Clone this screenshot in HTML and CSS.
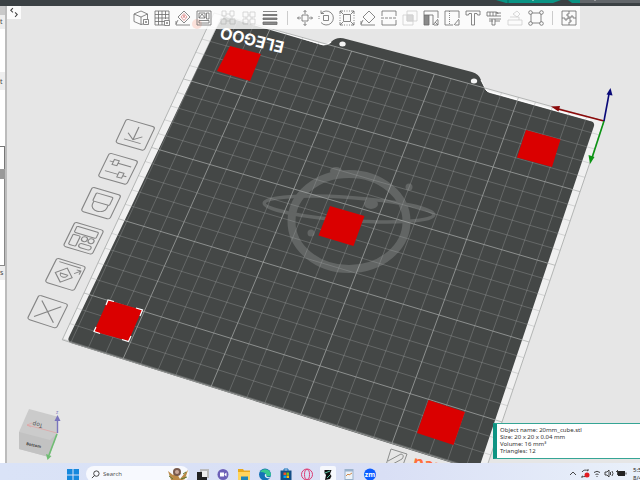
FILE: index.html
```
<!DOCTYPE html>
<html lang="en">
<head>
<meta charset="utf-8">
<title>20mm_cube</title>
<link rel="stylesheet" href="styles.css">
</head>
<body>
<header class="titlebar">
  <svg class="tabs" viewBox="0 0 152 6" aria-hidden="true">
    <path d="M8 0h65l-8 3H18z" fill="#0a9384"/><path d="M20 0v3M45 0v1" stroke="#04695f"/><path d="M45 0v1" stroke="#cfe"/>
    <path d="M80 0h12v3h-8z" fill="#0a9384"/><path d="M92 0h60v3H92z" fill="#62666a"/><path d="M107 0v1" stroke="#ccc"/>
  </svg>
</header>
<main class="work">
  <aside class="panel">
    <div class="block block-head"></div>
    <div class="block block-a">t</div>
    <div class="block block-b">t</div>
    <div class="block block-c"></div>
    <div class="block block-sel"></div>
    <div class="block block-d"></div>
    <div class="block block-e">s</div>
  </aside>
  <section class="viewport">
    <svg class="scene" viewBox="7 6 633 457" preserveAspectRatio="xMinYMin slice" role="img" aria-label="Build plate">
      <path id="margin" fill="#f0f0f0"/>
      <path fill="#444746" d="M217 27Q221 18 226 17L322 45Q327 46 331 42Q337 36 346 39L472 72Q479 74 481 80L486 90Q487 92 490 93L590 121Q595 122 594 126L478 471L417 452L71 343Q67 341 69 337Z"/>
      <path fill="none" stroke="#fff" stroke-width="1.2" d="M272 29L322 44.500Q327 45.500 331 42"/>
      <path fill="none" stroke="#fff" stroke-width="1" d="M481 80L486 90Q487 92 490 92L590 120"/>
      <ellipse cx="342.500" cy="44" rx="3.200" ry="2.500" fill="#f4f4f4"/><ellipse cx="474" cy="81" rx="3.200" ry="2.500" fill="#f4f4f4"/>
      <g fill="none" stroke="#626564">
        <ellipse cx="349" cy="221.500" rx="57.500" ry="47.500" stroke-width="8"/>
        <ellipse cx="349" cy="209" rx="85" ry="11.500" stroke-width="3.500" transform="rotate(4 349 209)"/>
      </g>
      <g fill="#626564"><ellipse cx="336" cy="171" rx="6" ry="4"/><circle cx="409" cy="187" r="3.500"/><circle cx="311" cy="233" r="3.500"/><ellipse cx="371" cy="204" rx="7" ry="5"/></g>
      <path id="thin" fill="none" stroke="#9da09f" stroke-width=".6" stroke-opacity=".62"/>
      <path id="bold" fill="none" stroke="#a8abaa" stroke-width=".9" stroke-opacity=".8"/>
      <path id="edge" fill="none" stroke="#a5a7a6" stroke-width=".8"/>
      <text class="brand" transform="translate(285 42) rotate(193.500)">ELEGOO</text>
      <g fill="#da0000">
        <path d="M230 46L261 54L250 81L217 71Z"/><path d="M526 130L560.500 139.500L552 167L517 157.500Z"/>
        <path d="M330 206L364.500 216L353.500 246L318.500 235.500Z"/><path d="M108 300L142 310L128.500 341L94 331.500Z"/><path d="M428.500 400L465 412L453.500 445L417 433Z"/>
      </g>
      <path fill="none" stroke="#fff" stroke-width="1.200" d="M106 305L108 300L114 301.500M136 308L142.500 310L140 316M96 327L94 331.500L100 333.500M122 339.500L128.500 341.500L131 336"/>
      <path stroke="#8c0a0a" stroke-width="1.600" d="M604 121L558 109"/><path fill="#8c0a0a" d="M551 106.500L560 106L558.500 111.500Z"/>
      <path stroke="#0c9414" stroke-width="1.600" d="M604 121L592 158"/><path fill="#0c9414" d="M590 164L588.500 155L594.500 157Z"/>
      <path stroke="#0a0a78" stroke-width="1.600" d="M604 121L609 94"/><path fill="#0a0a78" d="M610.500 88L606.500 94.500L612.500 95.500Z"/>
      <g fill="none" stroke="#8b8d8c" stroke-width="1"><path d="M391 449L407 454L403 465H386Z"/><path d="M388 461L401 454Q405 455 402 459L391 465"/></g>
      <text class="plate-name" transform="translate(412 467) rotate(12)">pau</text>
      <path fill="#cbcbcb" d="M29 409L57 416.500L57.500 433L49 457L19 449L19 432Z"/><path fill="#c2c2c2" d="M19 432L50 440L57.500 433L49 457L19 449Z"/>
      <path d="M57 433L27 425M32 423L27 425L31 427" fill="none" stroke="#dfa5a5" stroke-width=".8"/>
      <path stroke="#7974bd" stroke-width="1.400" d="M57.500 433V421"/><path fill="#7974bd" d="M54.500 421L57.500 415L60.500 421Z"/>
      <path stroke="#6fbd73" stroke-width="1.600" d="M57 434L49 455"/><path fill="#6fbd73" d="M47.500 460L46 454L51.500 456Z"/>
      <text class="cube-top" transform="translate(43 424) rotate(193)">Top</text><text class="cube-front" transform="translate(26 445) rotate(12)">Bottom</text>
      <text class="cube-z" x="56" y="414">z</text>
    </svg>

    <button class="expand" aria-label="Toggle panel"><svg viewBox="0 0 13 12"><path d="M5.500 2L3.500 4L5.500 6M7.500 6L9.500 8L7.500 10" class="ln"/></svg></button>

    <nav class="toolbar" aria-label="Tools">
      <button aria-label="Add object"><svg viewBox="0 0 16 16"><path d="M1 4L8 1L14.500 4V9M1 4V11.500L8 14.500V7M1 4L8 7L14.500 4M8 14.500L10 14M10.500 9.500h5v5h-5zM13 11v2M12 12h2"/></svg></button>
      <button aria-label="Add plate"><svg viewBox="0 0 16 16"><path d="M10 15H1V1h14v9M4.500 1v14M8 1v14M11.500 1v8M1 4.500h14M1 8h14M1 11.500h9M10.500 10.500h5v5h-5zM13 12v2M12 13h2"/></svg></button>
      <button aria-label="Auto orient"><svg viewBox="0 0 16 16"><path d="M9 1L15 7L9 13L3 7ZM3 10L1 14M1 11v4h14"/><path class="hot" d="M9 3.500L12 7L9 10.500L6 7ZM8 8l1-3l1 3"/></svg></button>
      <button aria-label="Arrange"><svg viewBox="0 0 16 16"><circle class="glow" cx="1" cy="14" r="5"/><path d="M1 1h14v14H1zM3 3h6v5H3zM10.500 3h2.500v6h-2.500zM3 10.500h10v2.500H3zM3 8l3-4l3 4"/></svg></button>
      <button class="faint gap" aria-label="Split to objects"><svg viewBox="0 0 16 16"><path d="M2 1h4v5H2zM10 1h4v5h-4zM6 4h4M1 9h5v5H1zM10 9h5v5h-5zM6 11h4M4 6v3M12 6v3"/></svg></button>
      <button class="faint" aria-label="Split to parts"><svg viewBox="0 0 16 16"><path d="M2 2h5v5H2zM9 2h5v5H9zM2 9h5v5H2zM9 9h5v5H9zM7 5h2M7 11h2M5 7v2M11 7v2"/></svg></button>
      <button aria-label="Layer height"><svg viewBox="0 0 16 16"><path d="M1 1.500h14M1 4.500h14v1H1zM1 8h14v1.500H1zM1 12h14v2.500H1z" class="solid"/></svg></button>
      <span class="sep"></span>
      <button aria-label="Move"><svg viewBox="0 0 16 16"><path d="M5 5h6v6H5zM8 4V.500M6.500 2L8 .500L9.500 2M8 12v3.500M6.500 14L8 15.500L9.500 14M4 8H.500M2 6.500L.500 8L2 9.500M12 8h3.500M14 6.500L15.500 8L14 9.500"/></svg></button>
      <button aria-label="Rotate"><svg viewBox="0 0 16 16"><path d="M5.500 5.500h5v5h-5zM3 3.500A7 7 0 1 1 3 12.500M3 .500v3h3"/><path d="M1 6v4" stroke-dasharray="1 1"/></svg></button>
      <button aria-label="Scale"><svg viewBox="0 0 16 16"><path d="M4.500 4.500h7v7h-7zM1 4V1h3M12 1h3v3M15 12v3h-3M4 15H1v-3M1 1l3 3M15 1l-3 3M1 15l3-3M15 15l-3-3"/><path d="M5 1h6M5 15h6M1 5v6M15 5v6" stroke-dasharray="1 1.500"/></svg></button>
      <button aria-label="Place on face"><svg viewBox="0 0 16 16"><path d="M9 1L15 7L9 13L3 7ZM3 10L1 14M1 11v4h14"/></svg></button>
      <button aria-label="Cut"><svg viewBox="0 0 16 16"><path d="M1 6V1h14v5M1 10v5h14v-5"/><path d="M0 8h16" stroke-dasharray="3 1"/></svg></button>
      <button class="faint" aria-label="Mesh boolean"><svg viewBox="0 0 16 16"><path d="M1 5h10v10H1zM5 1h10v10H5z"/><path class="solid" d="M5 5h6v6H5z"/></svg></button>
      <button aria-label="Support painting"><svg viewBox="0 0 16 16"><path d="M1 5V1h14v7M6 5h4v10M10 15l5-6M11 15h4v-5M12 12l3 3"/><path class="solid" d="M1 5h5v10H1z"/></svg></button>
      <button aria-label="Seam painting"><svg viewBox="0 0 16 16"><path d="M9 15H1V1h14v7M10 15l5-6M11 15h4v-5"/><path d="M5.500 1v14" stroke-dasharray="1 1"/></svg></button>
      <button aria-label="Text"><svg viewBox="0 0 16 16"><path d="M1 1h14v4h-2.500l-.5-1.500H9.500V15h-3V3.500H4L3.500 5H1z"/></svg></button>
      <button aria-label="Measure"><svg viewBox="0 0 16 16"><path d="M1 2v4M1 2h9q2 0 2 2M1 6h9M4 2v4M7 2v4M10 2v4M10 3h5M10 6h5M3 9h12M3 11h4M6 9v6M9 9v6M9 11h5M6 15h3"/></svg></button>
      <button class="faint" aria-label="Emboss"><svg viewBox="0 0 16 16"><path d="M1 10h14v5H1zM3 7h9v3M6 4l4-3l3 3l-3 3z"/></svg></button>
      <button aria-label="Variable size"><svg viewBox="0 0 16 16"><path d="M4 3h8M4 13h8M3 4v8M13 4v8"/><circle cx="2.500" cy="2.500" r="1.800"/><circle cx="13.500" cy="2.500" r="1.800"/><circle cx="2.500" cy="13.500" r="1.800"/><circle cx="13.500" cy="13.500" r="1.800"/></svg></button>
      <span class="sep sep-tight"></span>
      <button aria-label="Assembly"><svg viewBox="0 0 16 16"><path d="M1 1h14v14H1zM8 1v3H6v2h2v3M8 15v-3h2v-2H8M1 8h3v2h2V8h4V6h2v2h3"/></svg></button>
    </nav>

    <button class="plate-btn p1" aria-label="Move plate down"><svg viewBox="0 0 42 35"><g transform="matrix(1.190 .340 -.460 .980 12.500 1)"><rect width="24" height="24" rx="2"/><path d="M12 4v13M6 12l6 5l6-5M5 18.500h14"/></g></svg></button>
    <button class="plate-btn p2" aria-label="Plate settings"><svg viewBox="0 0 42 35"><g transform="matrix(1.190 .340 -.480 .980 12.500 1)"><rect width="24" height="24" rx="2"/><path d="M3 7h3M10 7h11M3 17h11M18 17h3M6 4.500h4v5H6zM14 14.500h4v5h-4z"/></g></svg></button>
    <button class="plate-btn p3" aria-label="Lock plate"><svg viewBox="0 0 42 35"><g transform="matrix(1.190 .350 -.480 1 12.500 1)"><rect width="24" height="24" rx="2"/><rect x="5" y="4" width="14" height="8" rx="1"/><path d="M6 12v3a6 5 0 0 0 12 0v-3"/></g></svg></button>
    <button class="plate-btn p4" aria-label="Arrange plate"><svg viewBox="0 0 42 35"><g transform="matrix(1.200 .360 -.490 1 13 1)"><rect width="24" height="24" rx="2"/><rect x="3" y="3" width="18" height="6" rx="1"/><rect x="3" y="11" width="6" height="10" rx="1"/><circle cx="13" cy="12.500" r="2.300"/><circle cx="18.500" cy="12.500" r="2.300"/><rect x="11" y="17" width="10" height="4" rx="2"/></g></svg></button>
    <button class="plate-btn p5" aria-label="Orient plate"><svg viewBox="0 0 42 35"><g transform="matrix(1.200 .370 -.500 1 13 1)"><rect width="24" height="24" rx="2"/><path d="M3 2.500h18M11 6l7 7l-7 7l-7-7zM18 9l4-4M18.500 5H22v3.500M8 12h6a3 3 0 0 1-6 0z"/></g></svg></button>
    <button class="plate-btn p6" aria-label="Remove plate"><svg viewBox="0 0 42 35"><g transform="matrix(1.210 .390 -.490 1 13 1)"><rect width="24" height="24" rx="2"/><path d="M4 4l16 16M20 4L4 20"/></g></svg></button>

    <div class="info" role="status">
      <p>Object name: 20mm_cube.stl</p><p>Size: 20 x 20 x 0.04 mm</p><p>Volume: 16 mm³</p><p>Triangles: 12</p>
    </div>
  </section>
</main>
<footer class="taskbar">
  <button class="app" aria-label="Start"><svg viewBox="0 0 16 16"><path fill="#1588dd" d="M2 3h5.500v5.500H2zM8.500 3H14v5.500H8.500zM2 9.500h5.500V15H2zM8.500 9.500H14V15H8.500z"/></svg></button>
  <label class="search"><svg viewBox="0 0 10 10"><circle cx="6" cy="4" r="3"/><path d="M4 6L1 9"/></svg><input type="text" placeholder="Search" aria-label="Search">
    <svg class="critter" viewBox="0 0 22 16"><path fill="#bc8a48" d="M1 5l5 4l3-3l4 7l5-6l3-3l-3 9l-7 3l-7-2z"/><circle cx="10" cy="6" r="4" fill="#77594d"/><circle cx="10" cy="6" r="2" fill="#c9a99c"/><path d="M2 10l4 3M16 8l3-2M14 13l6-2" stroke="#607b38"/></svg></label>
  <button class="app" aria-label="Task view"><svg viewBox="0 0 16 16"><path fill="#bbb" d="M6 3h9v9H6z"/><path fill="#222" d="M3 6h5v5h5v4H3z"/><path fill="#eee" d="M8 5h5v6H8z"/></svg></button>
  <button class="app" aria-label="Chat"><svg viewBox="0 0 16 16"><circle cx="8" cy="8.500" r="5.500" fill="#6d60b8"/><path fill="#fff" d="M5 6.500h4v4H5zM9.500 8l2-1.500v4l-2-1.500z"/></svg></button>
  <button class="app" aria-label="Files"><svg viewBox="0 0 16 16"><path fill="#e9a91c" d="M2 3h5l1 1.500h6V14H2z"/><path fill="#ffd45c" d="M2 6h12v8H2z"/><path fill="#1f86b9" d="M5 10.500h7V14H5z"/></svg></button>
  <button class="app" aria-label="Edge"><svg viewBox="0 0 16 16"><circle cx="8" cy="8.500" r="6" fill="#1572b6"/><path fill="#36c88f" d="M3 6a6 6 0 0 1 11 3q-1 2-5 1q1-4-6-4z"/><path fill="#e4eefa" d="M8 8q2 0 1 2q2 2 5 1q-2 2-4 1q-3-1-2-4z"/></svg></button>
  <button class="app" aria-label="Store"><svg viewBox="0 0 16 16"><path d="M6 5V3h4v2" fill="none" stroke="#1674b8"/><path fill="#144f86" d="M2.500 4.500h11V14h-11z"/><path fill="#f35325" d="M5.500 6.500H8V9H5.500z"/><path fill="#81bc06" d="M8.500 6.500H11V9H8.500z"/><path fill="#05a6f0" d="M5.500 9.500H8V12H5.500z"/><path fill="#ffba08" d="M8.500 9.500H11V12H8.500z"/></svg></button>
  <button class="app" aria-label="Opera"><svg viewBox="0 0 16 16"><g fill="none" stroke="#dd3d73"><circle cx="8" cy="8.500" r="5.500"/><ellipse cx="8" cy="8.500" rx="2.500" ry="5"/></g></svg></button>
  <button class="app active" aria-label="Slicer"><svg viewBox="0 0 16 16"><path fill="#111" d="M4.500 4H11.500L10 8L11.500 10L10 13L5 14L6 9L4.500 7z"/><path d="M5 7l5-2M7 12l3-3" stroke="#5fc9a8"/></svg></button>
  <button class="app" aria-label="Notes"><svg viewBox="0 0 16 16"><path fill="#9ab2cb" d="M3.500 3h9v11h-9z"/><path fill="#edf3f8" d="M4.500 5.500h7V13h-7z"/><path d="M5 10l2-2l1 1l3-2" fill="none" stroke="#d28b4f"/></svg></button>
  <button class="app" aria-label="Zoom"><svg viewBox="0 0 16 16"><circle cx="8" cy="8.500" r="6" fill="#0b5cff"/><text class="zm" x="8" y="11" text-anchor="middle">zm</text></svg></button>
  <div class="tray">
    <svg viewBox="0 0 12 14"><path d="M3 9l3-3l3 3" class="tr"/></svg>
    <svg viewBox="0 0 12 14"><path d="M3 6a4 4 0 0 1 6-1V3M9 8a4 4 0 0 1-6 2v2" class="tr"/><circle cx="8" cy="9" r="2.500" fill="#e11b22"/></svg>
    <svg viewBox="0 0 12 14"><path d="M3 6.500q3-2.500 6 0M4.500 8.500q1.500-1 3 0M6 10v1" class="tr"/></svg>
    <svg viewBox="0 0 12 14"><path d="M2 6h2l2-2v7L4 9H2zM7.500 6v3M9 5q2 2.500 0 5" class="tr"/></svg>
    <svg viewBox="0 0 12 14"><path fill="#222" d="M3 5h7v5H3z"/><path d="M1 5.500h3M2.500 4v5M11 6.500v2" class="tr"/></svg>
    <time class="clock">5:5<br>8/4</time>
  </div>
</footer>
<script src="grid.js"></script>
</body>
</html>
```
FILE: styles.css
```
* { box-sizing: border-box; }
body { margin: 0; height: 100vh; display: grid; grid-template-rows: 6px minmax(0, 1fr) 17px; overflow: hidden; background: #e6e6e6; font-family: "Noto Sans", sans-serif; color: #444; }
button { border: 0; padding: 0; background: none; display: block; }
svg { display: block; }
p { margin: 0; }

.titlebar { background: #3b4144; display: flex; justify-content: flex-end; }
.tabs { width: 152px; height: 6px; }

.work { display: flex; min-height: 0; }
.panel { flex: 0 0 7px; background: #fff; border-right: 2px solid #bcbcbc; display: flex; flex-direction: column; font-size: 7px; line-height: 10px; overflow: hidden; }
.block-head { height: 9px; background: #c9c9c9; }
.block-a { height: 57px; padding-top: 2px; background: linear-gradient(#eee 14px, #fff 14px); }
.block-b { height: 75px; padding-top: 5px; background: linear-gradient(#eee 18px, #fff 18px); border-bottom: 1px solid #777; }
.block-c { height: 22px; border-right: 1px solid #777; }
.block-sel { height: 10px; background: #999; }
.block-d { height: 87px; border-right: 1px solid #888; border-bottom: 1px solid #888; }
.block-e { flex: 1; padding-top: 2px; background: linear-gradient(#eee 14px, #fff 14px); }

.viewport { flex: 1; min-width: 0; position: relative; overflow: hidden; background: #e6e6e6; }
.scene { position: absolute; inset: 0; width: 100%; height: 100%; }
.brand { font: bold 16px Inter, sans-serif; fill: #fff; }
.plate-name { font: bold 17px "Open Sans", sans-serif; fill: #ff6f3d; }
.cube-top { font: 6px "Noto Sans", sans-serif; fill: #555; }
.cube-front { font: bold 4px "Noto Sans", sans-serif; fill: #444; }
.cube-z { font: 5px "Noto Sans", sans-serif; fill: #7974bd; }

.expand { position: absolute; left: 0; top: 0; width: 14px; height: 13px; background: #fbfbfb; }
.ln { fill: none; stroke: #444; }

.toolbar { position: relative; width: max-content; height: 23px; margin-left: 123px; padding: 0 3px; display: flex; align-items: center; gap: 5px; background: rgb(255 255 255 / 82%); }
.toolbar svg { width: 16px; height: 16px; fill: none; stroke: #6b6b6b; stroke-width: .8; overflow: visible; }
.toolbar .solid { fill: #8a8a8a; }
.toolbar .hot { stroke: #d88; }
.toolbar .glow { fill: rgb(255 130 100 / 22%); stroke: none; }
.faint { opacity: .3; }
.gap { margin-left: 3px; }
.sep { width: 1px; height: 14px; margin: 0 4px; background: #ccc; }
.sep-tight { margin: 0 3px; }

.plate-btn { position: absolute; width: 42px; height: 35px; }
.plate-btn svg { width: 42px; height: 35px; fill: none; stroke: #858585; stroke-width: .9; }
.p1 { left: 107px; top: 112px; }
.p2 { left: 90px; top: 146px; }
.p3 { left: 73px; top: 180px; }
.p4 { left: 55px; top: 215px; }
.p5 { left: 37px; top: 251px; }
.p6 { left: 19px; top: 288px; }

.info { position: absolute; right: 0; bottom: 4px; width: 147px; padding: 3px 0 3px 3px; border: 1px solid #35a595; border-left: 4px solid #0f9483; border-right: 0; background: #fff; font-size: 6px; line-height: 7px; color: #333; }

.taskbar { display: flex; align-items: flex-start; gap: 5px; padding: 3px 0 0 65px; overflow: hidden; background: linear-gradient(90deg, #dae3f7, #d9dff5 60%, #e9f0fa); }
.app, .app svg { flex: none; width: 16px; height: 16px; }
.active { background: #f6f8fd; border-radius: 2px; }
.search { flex: none; width: 103px; height: 16px; display: flex; align-items: center; gap: 3px; padding-left: 5px; border-radius: 8px; background: #f7f9fe; }
.search svg { flex: none; width: 9px; height: 9px; fill: none; stroke: #333; }
.search .critter { width: 22px; height: 16px; stroke: none; }
.search input { flex: 1; min-width: 0; border: 0; padding: 0; background: none; font: 6px "Noto Sans", sans-serif; color: #555; }
.search input::placeholder { color: #555; }
.zm { font: bold 7px "Open Sans", sans-serif; fill: #fff; }
.tray { margin-left: auto; display: flex; }
.tray svg { width: 12px; height: 14px; flex: none; }
.tr { fill: none; stroke: #333; stroke-width: .9; }
.clock { width: 13px; padding-left: 6px; overflow: hidden; font-size: 6px; line-height: 8px; color: #222; white-space: nowrap; }
```
FILE: grid.js
```
// Projects the bed (10 mm cells) onto the view.
const SIZE = 23.5;
const DEPTH = 23.05;
const REF = 20;
const a = [604, 121], b = [214, 13], c = [84, 293], d = [502, 422];

// Unit square to quadrilateral.
const dx1 = b[0] - c[0], dx2 = d[0] - c[0], sx = a[0] - b[0] + c[0] - d[0];
const dy1 = b[1] - c[1], dy2 = d[1] - c[1], sy = a[1] - b[1] + c[1] - d[1];
const den = dx1 * dy2 - dx2 * dy1;
const g = (sx * dy2 - dx2 * sy) / den;
const h = (dx1 * sy - sx * dy1) / den;

function project(x, y) {
  const u = x / SIZE, v = y / REF, w = g * u + h * v + 1;
  const px = (b[0] - a[0] + g * b[0]) * u + (d[0] - a[0] + h * d[0]) * v + a[0];
  const py = (b[1] - a[1] + g * b[1]) * u + (d[1] - a[1] + h * d[1]) * v + a[1];
  return (px / w).toFixed(2) + " " + (py / w).toFixed(2);
}

const line = (x1, y1, x2, y2) => "M" + project(x1, y1) + "L" + project(x2, y2);
let thin = "", bold = "";
for (let i = 1; i < SIZE; i++) {
  const pair = line(i, 0, i, DEPTH) + line(0, i, SIZE, i);
  if (i % 5) thin += pair; else bold += pair;
}
const outline = "M" + project(0, 0) + "L" + project(SIZE, 0) + "L" + project(SIZE, DEPTH) + "L" + project(0, DEPTH) + "Z";
document.getElementById("thin").setAttribute("d", thin);
document.getElementById("bold").setAttribute("d", bold);
document.getElementById("edge").setAttribute("d", outline);
document.getElementById("margin").setAttribute("d", outline);
```
